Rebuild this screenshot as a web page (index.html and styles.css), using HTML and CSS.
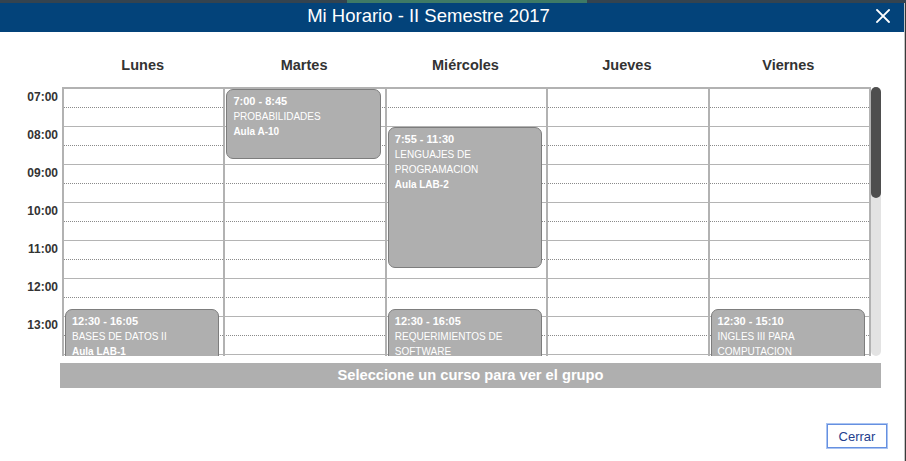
FILE: index.html
```html
<!DOCTYPE html>
<html lang="es">
<head>
<meta charset="utf-8">
<title>Mi Horario</title>
<link rel="stylesheet" href="styles.css">
</head>
<body>
<div class="topstrip"><span class="topstrip-accent"></span></div>
<div class="modal">
  <header class="modal-head">
    <h1 class="modal-title">Mi Horario - II Semestre 2017</h1>
    <button class="close" aria-label="Cerrar">
      <svg width="14" height="14" viewBox="0 0 14 14"><path d="M1 1 L13 13 M13 1 L1 13" stroke="#fff" stroke-width="1.8" stroke-linecap="square" fill="none"/></svg>
    </button>
  </header>
  <div class="modal-body">
    <div class="days">
      <div></div>
      <div class="day">Lunes</div>
      <div class="day">Martes</div>
      <div class="day">Miércoles</div>
      <div class="day">Jueves</div>
      <div class="day">Viernes</div>
      <div></div>
    </div>
    <div class="viewport">
      <div class="scroller">
        <div class="sched">
          <div class="times">
            <div class="t">07:00</div><div class="t">08:00</div><div class="t">09:00</div><div class="t">10:00</div>
            <div class="t">11:00</div><div class="t">12:00</div><div class="t">13:00</div>
          </div>
          <div class="grid">
            <div class="col">
              <div class="ev" style="top:220px;height:141px">
                <div class="ev-time">12:30 - 16:05</div>
                <div class="ev-name">BASES DE DATOS II</div>
                <div class="ev-room">Aula LAB-1</div>
              </div>
            </div>
            <div class="col">
              <div class="ev" style="top:0px;height:70px">
                <div class="ev-time">7:00 - 8:45</div>
                <div class="ev-name">PROBABILIDADES</div>
                <div class="ev-room">Aula A-10</div>
              </div>
            </div>
            <div class="col">
              <div class="ev" style="top:38px;height:141px">
                <div class="ev-time">7:55 - 11:30</div>
                <div class="ev-name">LENGUAJES DE PROGRAMACION</div>
                <div class="ev-room">Aula LAB-2</div>
              </div>
              <div class="ev" style="top:220px;height:141px">
                <div class="ev-time">12:30 - 16:05</div>
                <div class="ev-name">REQUERIMIENTOS DE SOFTWARE</div>
              </div>
            </div>
            <div class="col"></div>
            <div class="col">
              <div class="ev" style="top:220px;height:105px">
                <div class="ev-time">12:30 - 15:10</div>
                <div class="ev-name">INGLES III PARA COMPUTACION</div>
              </div>
            </div>
          </div>
        </div>
      </div>
      <div class="sbar"><div class="sbar-thumb"></div></div>
    </div>
    <div class="bar">Seleccione un curso para ver el grupo</div>
    <div class="foot"><button class="btn">Cerrar</button></div>
  </div>
</div>
</body>
</html>
```
FILE: styles.css
```css
* { box-sizing: border-box; }
html, body {
  margin: 0;
  padding: 0;
  background: #3a3a3a;
  font-family: "Liberation Sans", Arial, sans-serif;
  overflow: hidden;
}
.topstrip {
  height: 3px;
  background: #34434f;
  display: flex;
}
.topstrip-accent {
  margin-left: 347px;
  width: 240px;
  background: #3e7a66;
}
.modal {
  width: 905px;
  height: 458px;
  background: #fff;
  border-right: 1px solid #c4c4c4;
}
.modal-head {
  height: 29px;
  background: #03437a;
  display: grid;
  grid-template-columns: 1fr 47px;
}
.modal-title {
  margin: 0;
  color: #fff;
  font-weight: normal;
  font-size: 18.5px;
  line-height: 25px;
  text-align: center;
}
.close {
  border: 0;
  background: transparent;
  padding: 0;
  margin: 6px 0 0 19px;
  width: 14px;
  height: 14px;
  display: flex;
}
.modal-body {
  padding-top: 23px;
}
.days {
  display: grid;
  grid-template-columns: 62px repeat(5, 1fr) 12px;
  width: 881px;
  height: 20px;
  margin-bottom: 12px;
}
.day {
  text-align: center;
  font-weight: bold;
  font-size: 14.5px;
  line-height: 20px;
  color: #333;
}
.viewport {
  display: flex;
  width: 881px;
  height: 269px;
}
.scroller {
  width: 871px;
  height: 269px;
  overflow: hidden;
}
.sbar {
  width: 10px;
  height: 269px;
  background: #e3e3e3;
  border-radius: 5px;
  flex: none;
}
.sbar-thumb {
  height: 111px;
  background: #4e4e4e;
  border-radius: 5px;
}
.sched {
  display: flex;
}
.times {
  width: 62px;
  padding-top: 2px;
  flex: none;
}
.t {
  height: 38px;
  text-align: right;
  padding-right: 4px;
  font-size: 12px;
  font-weight: bold;
  line-height: 16px;
  color: #333;
}
.grid {
  flex: 1;
  display: grid;
  grid-template-columns: repeat(5, 1fr);
  height: 648px;
  border-top: 2px solid #b2b2b2;
  border-right: 2px solid #b2b2b2;
  background:
    linear-gradient(to bottom, transparent 37px, #b4b4b4 37px) 0 0 / 100% 38px,
    linear-gradient(to right, transparent 1px, #fff 1px) 0 0 / 2px 100%,
    linear-gradient(to bottom, transparent 18px, #8a8a8a 18px, #8a8a8a 19px, transparent 19px) 0 0 / 100% 38px;
}
.col {
  position: relative;
  border-left: 2px solid #b2b2b2;
}
.ev {
  position: absolute;
  left: 1px;
  right: 4px;
  background: #afafaf;
  border: 1px solid #7d7d7d;
  border-radius: 7px;
  padding: 4px 6px 0 6px;
  color: #fff;
  overflow: hidden;
}
.ev-time {
  font-size: 11px;
  font-weight: bold;
  line-height: 15px;
}
.ev-name {
  font-size: 10px;
  line-height: 15px;
  color: #fff;
}
.ev-room {
  font-size: 10px;
  font-weight: bold;
  line-height: 15px;
}
.bar {
  margin: 7px 0 0 60px;
  width: 821px;
  height: 25px;
  background: #afafaf;
  color: #fff;
  font-weight: bold;
  font-size: 14.7px;
  line-height: 25px;
  text-align: center;
}
.foot {
  display: flex;
  justify-content: flex-end;
  padding: 36px 17px 0 0;
}
.btn {
  width: 60px;
  height: 24px;
  background: #fff;
  border: 1px solid #6690e0;
  box-shadow: 0 0 0 1px #aac4f2;
  font-family: "Liberation Sans", Arial, sans-serif;
  font-size: 13px;
  color: #24408e;
  padding: 0;
}
```
